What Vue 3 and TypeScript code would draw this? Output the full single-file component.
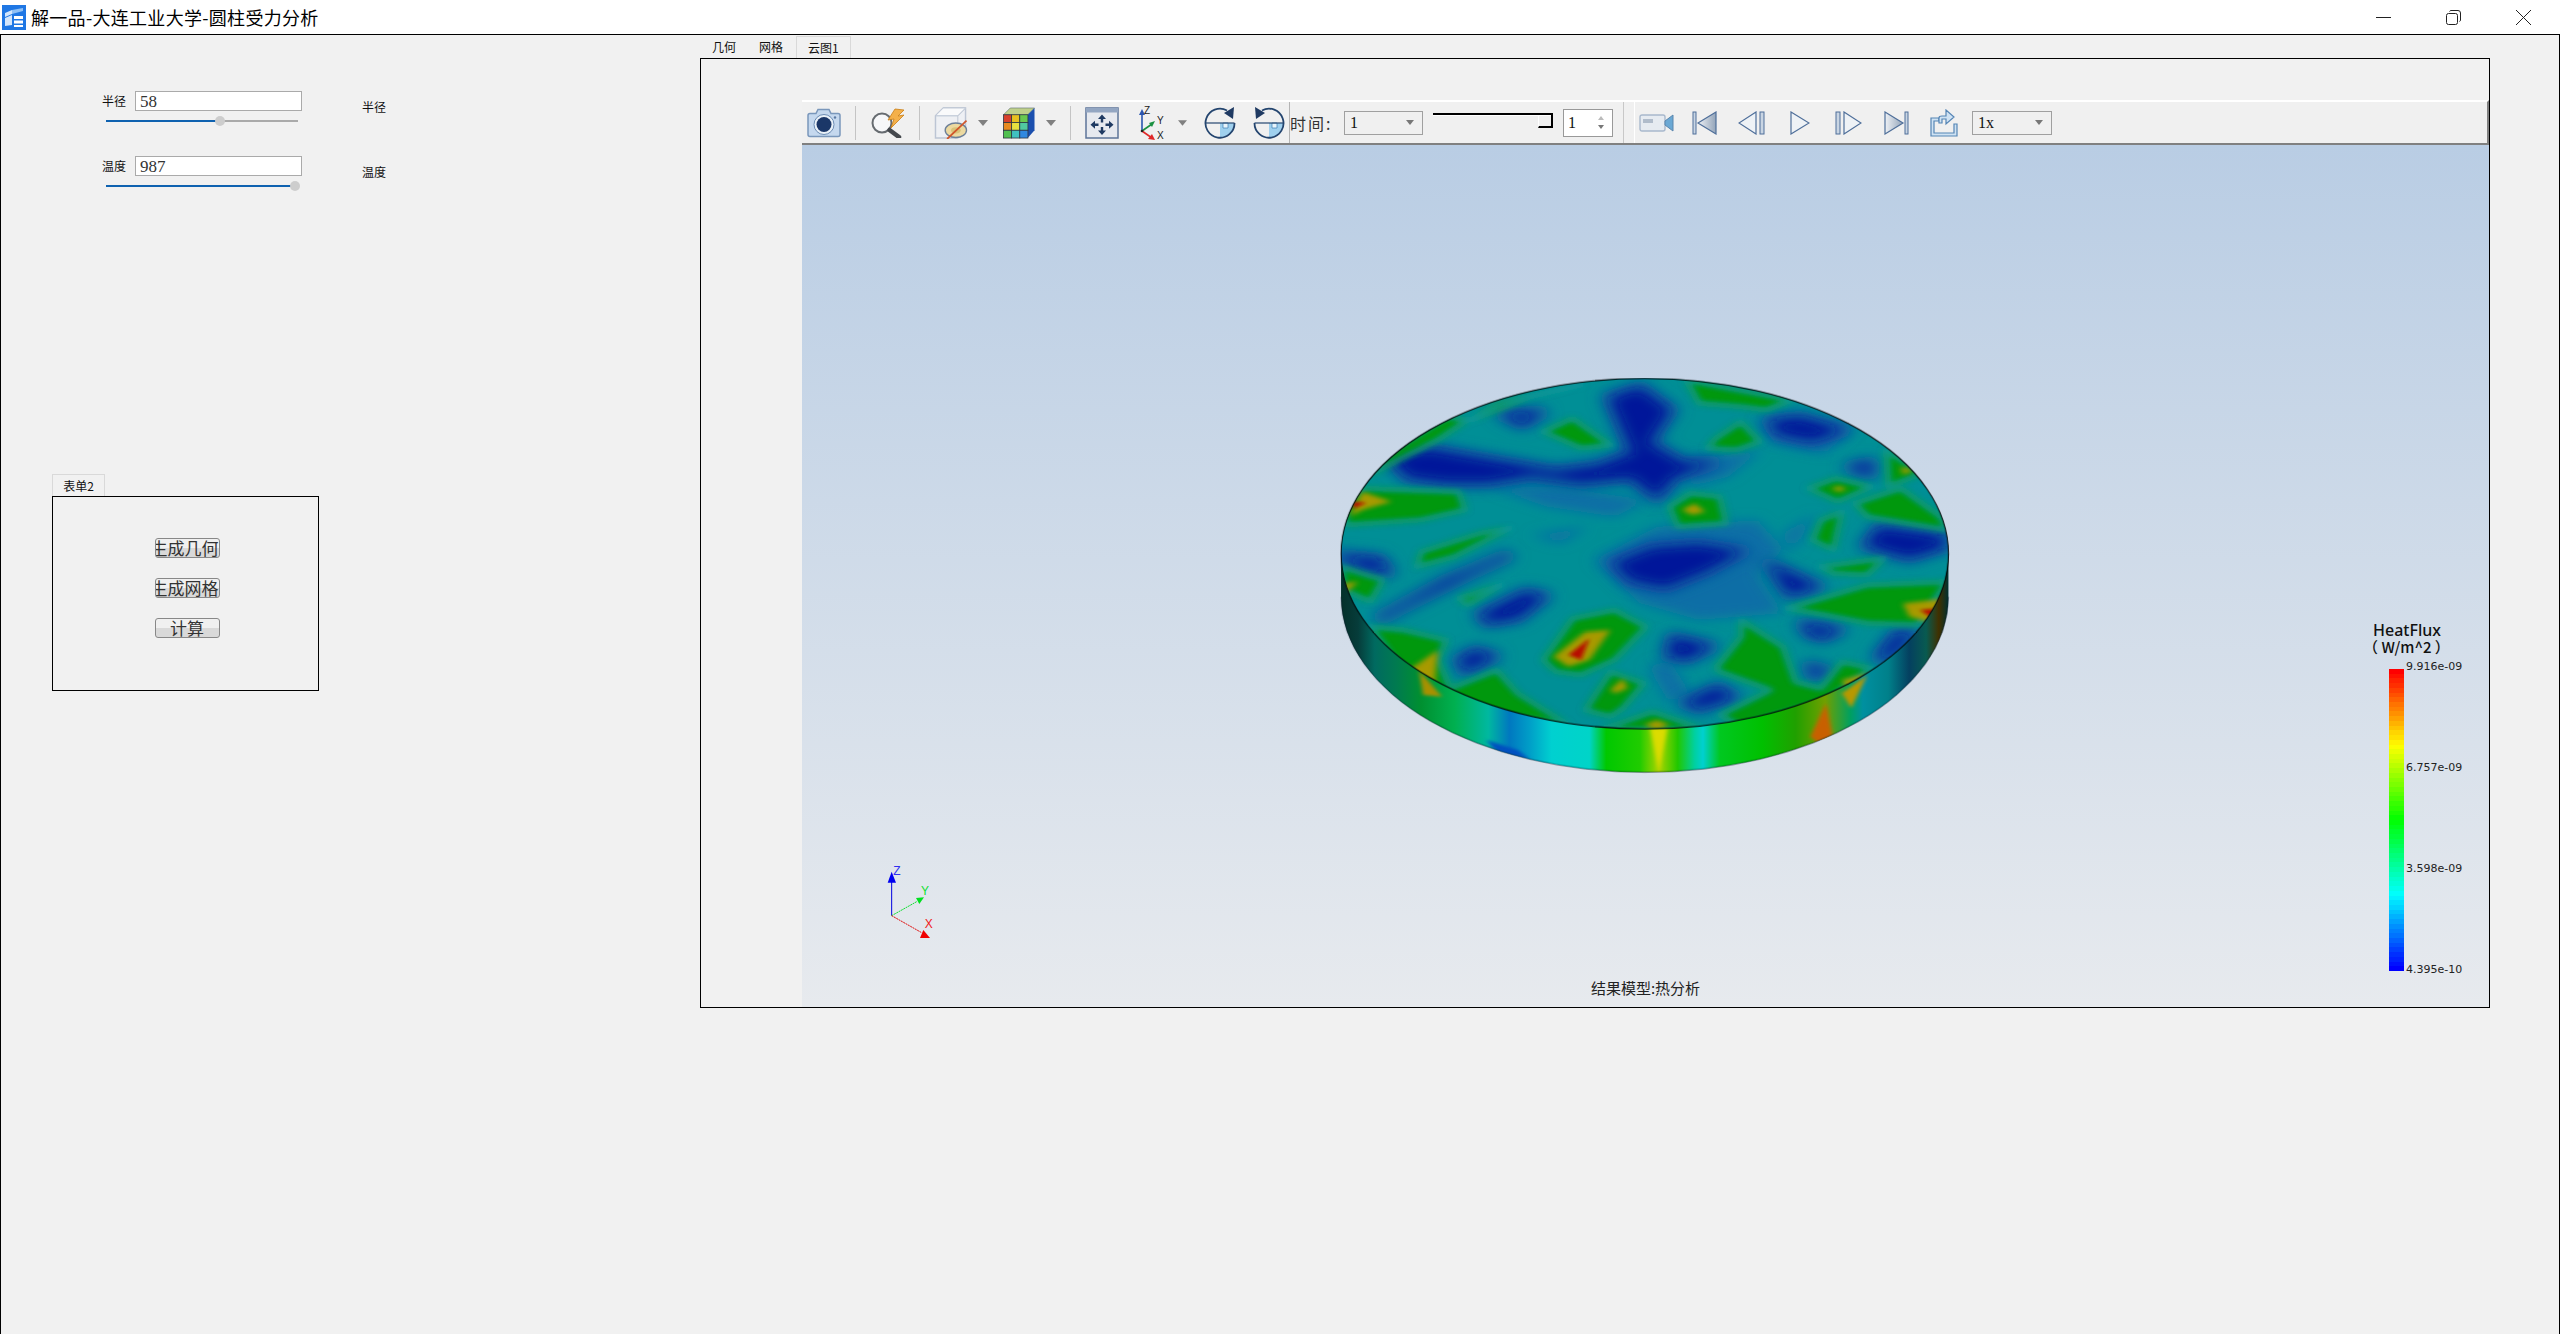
<script setup lang="ts">
interface Layer {
  color: string
  blur: string
  halo?: string
  shapes: string[]
}

// disk artwork is traced on a 1568x1290 grid, squeezed into 660x430 on screen
const blueShapes = [
  '165,290 260,270 420,305 560,335 660,320 745,280 690,115 760,85 830,150 780,250 860,310 930,310 840,350 800,410 740,350 620,365 500,345 400,365 300,365 210,350',
  '700,610 790,565 900,555 1000,575 920,630 820,680 740,660',
  '440,165 520,160 480,190',
  '1070,185 1140,175 1240,210 1170,240 1090,220',
  '1300,555 1330,505 1480,530 1480,560 1400,590',
  '1070,615 1180,680 1115,700',
  '1265,322 1305,312 1305,338',
  '50,590 140,600 160,635 100,620',
  '385,765 490,700 530,710 470,770 400,785',
  '150,770 300,665 440,590 370,630 210,730',
  '1150,795 1230,810 1195,830 1165,820',
  '840,835 925,860 870,895 830,885',
  '335,900 370,875 410,890 345,930',
  '870,1028 945,985 980,1010 900,1042',
  '1165,922 1195,932 1175,945',
  '1370,825 1405,820 1355,890 1330,890',
]
const midShapes = [
  '650,600 800,500 1040,480 1100,570 1040,640 1100,760 900,780 760,730',
  '780,920 830,900 880,1000 830,1030',
  '500,525 640,500 570,550',
  '880,300 1050,270 970,350 880,380',
  '1100,520 1180,460 1120,580',
  '400,380 560,380 780,420 700,470 540,440',
  '1040,180 1270,200 1200,280 1080,250',
]
const greenShapes = [
  '870,60 1120,120 1060,150 1000,140 900,130',
  '530,215 600,175 690,255 620,265',
  '940,235 1000,185 1045,245 990,270 920,265',
  '830,440 880,400 950,410 965,490 850,500',
  '1160,385 1225,355 1310,380 1230,425',
  '1345,270 1430,340 1350,380',
  '1270,430 1380,385 1475,470 1490,510 1300,470',
  '60,440 100,385 330,395 345,450 240,480 60,495',
  '240,575 380,520 450,505 320,590 230,620',
  '110,350 170,270 300,170 350,180 280,240',
  '120,800 200,810 300,840 280,900 310,985 420,930 470,1000 590,1095 400,1065 300,1000 180,910',
  '530,900 600,775 700,750 775,800 700,900 620,945 560,935',
  '630,1050 690,935 770,970 720,1045 690,1070',
  '700,1095 790,1055 860,1085 910,1110 660,1110',
  '940,925 1000,830 1000,780 1100,860 1130,965 1190,985 1240,905 1310,925 1200,1025 1000,1100 950,1065 1070,990 950,935',
  '1110,745 1300,675 1490,665 1420,795 1300,790 1200,765',
  '1190,620 1340,595 1300,645 1220,640',
  '1190,480 1240,455 1220,570 1170,540',
  '50,620 150,660 120,725 55,690',
  '330,715 430,675 350,735',
  '360,180 420,130 620,75 500,110',
]
const yellowShapes = [
  '70,470 100,395 170,425 100,450',
  '860,450 890,430 915,455 885,465',
  '555,890 630,815 690,810 640,900 590,920',
  '690,990 720,955 730,985 700,1000',
  '200,940 280,870 270,1000',
  '1385,730 1490,715 1460,790 1400,770',
  '1215,385 1235,378 1250,388 1232,395',
  '1380,320 1410,330 1385,345',
  '1240,960 1300,940 1260,1010',
  '55,670 90,665 60,700',
  '770,1095 800,1080 830,1095 800,1110',
]
const redShapes = [
  '76,425 110,428 80,445',
  '590,885 640,835 620,900',
  '1425,750 1475,745 1450,770',
]

const layers: Layer[] = [
  { color: '#0a6ea6', blur: 'url(#blur-wide)', shapes: midShapes },
  { color: '#00129a', blur: 'url(#blur-wide)', halo: '#0a5aa2', shapes: blueShapes },
  { color: '#009808', blur: 'url(#blur-mid)', shapes: greenShapes },
]

const sideColors: [number, string][] = [
  [50, '#04302a'], [90, '#063c3a'], [130, '#006a60'], [180, '#007a50'], [240, '#009030'],
  [320, '#00b050'], [400, '#00b8a0'], [450, '#0078c0'], [500, '#00a0c8'], [550, '#00d0d0'],
  [640, '#00d4c8'], [680, '#00c800'], [760, '#20cc00'], [805, '#a8d400'], [850, '#20c800'],
  [890, '#00d0a0'], [910, '#00d0d0'], [950, '#00c820'], [1050, '#00c000'], [1130, '#20a000'],
  [1200, '#70a000'], [1260, '#00a060'], [1290, '#0090a0'], [1350, '#00808a'], [1400, '#044060'],
  [1440, '#085a50'], [1470, '#403000'], [1493, '#003030'],
]
const sideStops = sideColors.map(([x, color]) => ({ offset: (x - 50) / 1443, color }))

const sideSpikes = [
  { color: '#dcdc00', points: '785,1105 825,1105 805,1235' },
  { color: '#c86000', points: '1165,1130 1202,1030 1218,1130 1205,1170' },
  { color: '#0050c0', points: '395,1140 470,1170 500,1200 420,1175' },
  { color: '#b89800', points: '1240,1000 1300,945 1262,1045' },
  { color: '#a89000', points: '235,930 290,1010 245,1005' },
]

const sidePath = 'M50,581 L50,711 A721.5,526 0 0 0 1493,711 L1493,581 Z'

// 64 steps from red down to blue, like the solver's color table
const legendBands = Array.from({ length: 64 }, (_, i) => `hsl(${Math.round((i / 63) * 240)}, 100%, 50%)`)
const legendLabels = ['9.916e-09', '6.757e-09', '3.598e-09', '4.395e-10']

const cubeCells = [
  '#d8402c', '#e8c020', '#68c850',
  '#e88a20', '#e8e040', '#50c8a0',
  '#50c050', '#40c0c0', '#3088e0',
]
</script>

<template>
  <div class="window">
    <header class="titlebar">
      <svg class="logo" viewBox="0 0 24 25">
        <rect width="24" height="25" fill="#1f77e4" />
        <path d="M3 8 L10 5 L10 9 L3 12 Z M3 13 L10 10 V20 L3 21 Z" fill="#d4e6fb" />
        <path d="M10 5 L21 3 V6 L10 9 Z" fill="#8fc0f5" />
        <path d="M12 11 H21 V14 H12 Z M12 15.500 H21 V18.500 H12 Z M12 20 H21 V22 H12 Z" fill="#fff" />
      </svg>
      <span class="app-title">解一品-大连工业大学-圆柱受力分析</span>
      <div class="win-buttons">
        <svg width="15" height="15" viewBox="0 0 15 15"><path d="M0 7.500H15" stroke="#222" fill="none" /></svg>
        <svg width="15" height="15" viewBox="0 0 15 15">
          <path d="M3.500 1.500 Q4 .5 5 .5 H12 Q14.500 .5 14.500 3 V10 Q14.500 11 13.500 11.500" stroke="#222" fill="none" />
          <rect x=".5" y="3.500" width="11" height="11" rx="2" stroke="#222" fill="none" />
        </svg>
        <svg width="15" height="15" viewBox="0 0 15 15"><path d="M0 0L15 15M15 0L0 15" stroke="#222" fill="none" /></svg>
      </div>
    </header>

    <main class="client">
      <section class="left">
        <div class="field">
          <div class="field-main">
            <div class="field-row">
              <label class="field-label">半径</label>
              <div class="text-input">58</div>
            </div>
            <div class="slider">
              <div class="slider-fill" style="width: 114px"></div>
              <div class="slider-thumb" style="left: 109px"></div>
            </div>
          </div>
          <span class="field-side">半径</span>
        </div>
        <div class="field">
          <div class="field-main">
            <div class="field-row">
              <label class="field-label">温度</label>
              <div class="text-input">987</div>
            </div>
            <div class="slider">
              <div class="slider-fill" style="width: 189px"></div>
              <div class="slider-thumb" style="left: 184px"></div>
            </div>
          </div>
          <span class="field-side">温度</span>
        </div>

        <div class="group">
          <div class="group-tab">表单2</div>
          <div class="group-box">
            <button class="push long">生成几何</button>
            <button class="push long">生成网格</button>
            <button class="push">计算</button>
          </div>
        </div>
      </section>

      <section class="right">
        <nav class="tabs">
          <span class="tab">几何</span>
          <span class="tab">网格</span>
          <span class="tab active">云图1</span>
        </nav>
        <div class="frame">
          <div class="viewer">
            <div class="toolbar">
              <div class="tb-view">
                <!-- camera -->
                <svg class="i34" viewBox="0 0 34 29">
                  <path d="M1 7 Q1 5 3 5 H9 L11 1 H22 L24 5 H31 Q33 5 33 7 V26 Q33 28 31 28 H3 Q1 28 1 26 Z" fill="#c5d8ee" stroke="#7a97bb" stroke-width="1.500" />
                  <circle cx="17" cy="16" r="10" fill="#eaf1f8" stroke="#6d8db4" />
                  <circle cx="17" cy="16" r="7.500" fill="#1b3768" />
                  <circle cx="28" cy="9" r="1.200" fill="#5b7aa3" />
                </svg>
                <span class="sep"></span>
                <!-- quick zoom -->
                <svg class="i35" viewBox="0 0 35 30">
                  <circle cx="12" cy="15" r="9.500" fill="#f6f7f9" stroke="#666b70" stroke-width="2" />
                  <path d="M19.500 22 L29 29" stroke="#44484d" stroke-width="4.500" stroke-linecap="round" />
                  <path d="M25 1 L18 12 L24 11 L21 20 L34 7 L28 8 L34 2 Z" fill="#f4b04a" stroke="#c97e14" stroke-width=".8" />
                </svg>
                <span class="sep"></span>
                <!-- hidden geometry -->
                <svg class="i34" viewBox="0 0 34 33">
                  <path d="M1 9 L9 1 H32 V23 L24 32 H1 Z" fill="#eef0f4" stroke="#bcc5d4" stroke-width="1.500" />
                  <path d="M1 9 H24 V32 M24 9 L32 1" fill="none" stroke="#c6ced9" stroke-width="1.200" />
                  <path d="M1 9 L9 1 H32 L24 9 Z" fill="#f9fafb" stroke="#bcc5d4" />
                  <ellipse cx="22" cy="24" rx="11" ry="7.500" fill="#ecd9a0" stroke="#6c7f98" stroke-width="1.400" />
                  <ellipse cx="22" cy="24" rx="5" ry="3.200" fill="#d9c378" />
                  <path d="M13 33 L33 14" stroke="#d0562a" stroke-width="1.800" />
                </svg>
                <svg class="drop" viewBox="0 0 10 6"><path d="M0 0H10L5 6Z" /></svg>
                <!-- result cube -->
                <svg class="i34 cube" viewBox="0 0 34 33">
                  <path d="M1 8 L8 1 H33 L26 8 Z" fill="#bfd08a" stroke="#5a6b70" stroke-width=".6" />
                  <path d="M26 8 L33 1 V24 L26 32 Z" fill="#1b4fae" />
                  <rect v-for="(c, i) in cubeCells" :key="i" :x="1 + (i % 3) * 8.400" :y="8 + Math.floor(i / 3) * 8" width="8.400" height="8" :fill="c" stroke="#2b3340" stroke-width=".8" />
                </svg>
                <svg class="drop" viewBox="0 0 10 6"><path d="M0 0H10L5 6Z" /></svg>
                <span class="sep"></span>
                <!-- fit all -->
                <svg class="i34" viewBox="0 0 34 32">
                  <rect x="1" y="1" width="32" height="30" fill="#e6e9ef" stroke="#5d7499" stroke-width="1.500" />
                  <rect x="1" y="1" width="32" height="4.500" fill="#93a6c2" />
                  <path d="M17 7.500 L21 12 H18.200 V15.500 H15.800 V12 H13 Z M17 28 L13 23.500 H15.800 V20 H18.200 V23.500 H21 Z M5.500 17.700 L10 13.700 V16.500 H13.500 V18.900 H10 V21.700 Z M28.500 17.700 L24 21.700 V18.900 H20.500 V16.500 H24 V13.700 Z" fill="#1f3a62" />
                </svg>
                <!-- axis -->
                <svg class="axis" viewBox="0 0 27 34">
                  <path d="M3 25 V7" stroke="#2a55b0" stroke-width="1.600" />
                  <path d="M3 3 L6 9 H0 Z" fill="#2a55b0" />
                  <path d="M3 25 L13 18" stroke="#1b9040" stroke-width="1.600" />
                  <path d="M16 15 L13 21 L10 17 Z" fill="#1b9040" />
                  <path d="M3 25 L13 32" stroke="#e02828" stroke-width="1.600" />
                  <path d="M16 34 L9 33 L13 28 Z" fill="#e02828" />
                  <circle cx="3" cy="25" r="1.300" fill="#222" />
                  <text class="axis-text" x="5" y="8">Z</text>
                  <text class="axis-text" x="18" y="18">Y</text>
                  <text class="axis-text" x="18" y="33">X</text>
                </svg>
                <svg class="drop small" viewBox="0 0 10 6"><path d="M0 0H10L5 6Z" /></svg>
                <!-- rotate cw -->
                <svg class="rot" viewBox="0 0 32 32">
                  <path d="M16 16 H30 A14.500 14.500 0 0 1 16 30.500 Z" fill="#9fd0ee" />
                  <path d="M19 16 V21 H24 V16 Z" fill="#e8f4fb" stroke="#3d7fb5" stroke-width=".7" />
                  <path d="M1.500 16 H30.500" stroke="#24456f" stroke-width="1.200" />
                  <path d="M23 3.500 A14.500 14.500 0 1 0 30.500 16" fill="none" stroke="#24456f" stroke-width="1.800" />
                  <path d="M30 0 L29 12 L20 6 Z" fill="#1f3a62" />
                </svg>
                <!-- rotate ccw -->
                <svg class="rot rot2" viewBox="0 0 32 32">
                  <path d="M16 16 H30 A14.500 14.500 0 0 1 16 30.500 Z" fill="#9fd0ee" />
                  <path d="M19 16 V21 H24 V16 Z" fill="#e8f4fb" stroke="#3d7fb5" stroke-width=".7" />
                  <path d="M1.500 16 H30.500" stroke="#24456f" stroke-width="1.200" />
                  <path d="M9 3.500 A14.500 14.500 0 1 1 1.500 16" fill="none" stroke="#24456f" stroke-width="1.800" />
                  <path d="M2 0 L3 12 L12 6 Z" fill="#1f3a62" />
                </svg>
              </div>

              <div class="tb-time">
                <span class="time-label">时间:</span>
                <div class="combo combo-time"><span>1</span><i class="combo-arrow"></i></div>
                <div class="time-slider"><div class="time-handle"></div></div>
                <div class="spin">
                  <span>1</span>
                  <div class="spin-arrows"><i class="up"></i><i class="down"></i></div>
                </div>
              </div>

              <div class="tb-play">
                <span class="play-btn">
                  <svg width="35" height="18" viewBox="0 0 35 18">
                    <defs>
                      <linearGradient id="media" x1="0" y1="0" x2="1" y2="0">
                        <stop offset="0" stop-color="#eef1f5" />
                        <stop offset="1" stop-color="#93a4b9" />
                      </linearGradient>
                    </defs>
                    <rect x="1" y="1" width="25" height="16" rx="2" fill="#e6ebf1" stroke="#a8b8cc" stroke-width="1.400" />
                    <rect x="4" y="5" width="10" height="4" fill="#b0bccb" />
                    <path d="M26 7 L34 1 V17 L26 11 Z" fill="#6aa8d4" stroke="#5a86ad" />
                  </svg>
                </span>
                <span class="play-btn">
                  <svg width="25" height="24" viewBox="0 0 25 24">
                    <rect x="1" y="1" width="3" height="22" fill="#c9d5e3" stroke="#4f6f9a" />
                    <path d="M24 1 V23 L6 12 Z" fill="url(#media)" stroke="#4f6f9a" stroke-width="1.200" />
                  </svg>
                </span>
                <span class="play-btn">
                  <svg width="28" height="24" viewBox="0 0 28 24">
                    <path d="M18 1 V23 L1 12 Z" fill="#eef2f6" stroke="#4f6f9a" stroke-width="1.200" />
                    <rect x="22" y="1" width="4" height="22" fill="#c9d5e3" stroke="#4f6f9a" />
                  </svg>
                </span>
                <span class="play-btn">
                  <svg width="20" height="24" viewBox="0 0 20 24">
                    <path d="M1 1 V23 L19 12 Z" fill="#eef2f6" stroke="#4f6f9a" stroke-width="1.200" />
                  </svg>
                </span>
                <span class="play-btn">
                  <svg width="28" height="24" viewBox="0 0 28 24">
                    <rect x="2" y="1" width="4" height="22" fill="#c9d5e3" stroke="#4f6f9a" />
                    <path d="M10 1 V23 L27 12 Z" fill="#eef2f6" stroke="#4f6f9a" stroke-width="1.200" />
                  </svg>
                </span>
                <span class="play-btn">
                  <svg width="25" height="24" viewBox="0 0 25 24">
                    <path d="M1 1 V23 L19 12 Z" fill="url(#media)" stroke="#4f6f9a" stroke-width="1.200" />
                    <rect x="21" y="1" width="3" height="22" fill="#c9d5e3" stroke="#4f6f9a" />
                  </svg>
                </span>
                <span class="play-btn">
                  <svg width="30" height="28" viewBox="0 0 30 28">
                    <path d="M2 9 H10 V12 H5 V24 H25 V15 H28 V27 H2 Z" fill="#cfe2f3" stroke="#5585b5" stroke-width="1.200" />
                    <path d="M10 14 V9 Q10 7 13 7 H17 V1 L25 8 L17 15 V10 H13 V14 Z" fill="#cfe2f3" stroke="#5585b5" stroke-width="1.200" />
                  </svg>
                </span>
                <div class="combo combo-speed"><span>1x</span><i class="combo-arrow"></i></div>
              </div>
            </div>

            <div class="view">
              <svg class="disk" viewBox="0 0 1568 1290" preserveAspectRatio="none">
                <defs>
                  <filter id="blur-wide" filterUnits="userSpaceOnUse" x="-100" y="-100" width="1800" height="1500"><feGaussianBlur stdDeviation="18" /></filter>
                  <filter id="blur-mid" filterUnits="userSpaceOnUse" x="-100" y="-100" width="1800" height="1500"><feGaussianBlur stdDeviation="11" /></filter>
                  <filter id="blur-small" filterUnits="userSpaceOnUse" x="-100" y="-100" width="1800" height="1500"><feGaussianBlur stdDeviation="7" /></filter>
                  <filter id="blur-tiny" filterUnits="userSpaceOnUse" x="-100" y="-100" width="1800" height="1500"><feGaussianBlur stdDeviation="5" /></filter>
                  <clipPath id="top-clip"><ellipse cx="771.5" cy="581" rx="721.5" ry="526" /></clipPath>
                  <clipPath id="side-clip"><path :d="sidePath" /></clipPath>
                  <linearGradient id="side-fill" gradientUnits="userSpaceOnUse" x1="50" y1="0" x2="1493" y2="0">
                    <stop v-for="s in sideStops" :key="s.offset" :offset="s.offset" :stop-color="s.color" />
                  </linearGradient>
                </defs>

                <path :d="sidePath" fill="url(#side-fill)" />
                <g clip-path="url(#side-clip)">
                  <g filter="url(#blur-tiny)">
                    <polygon v-for="s in sideSpikes" :key="s.points" :points="s.points" :fill="s.color" />
                  </g>
                </g>

                <ellipse cx="771.5" cy="581" rx="721.5" ry="526" fill="#008f96" />
                <g clip-path="url(#top-clip)">
                  <g v-for="layer in layers" :key="layer.color">
                    <g v-if="layer.halo" filter="url(#blur-wide)">
                      <polygon v-for="p in layer.shapes" :key="p" :points="p" :fill="layer.halo" :stroke="layer.halo" stroke-width="46" stroke-linejoin="round" />
                    </g>
                    <g :filter="layer.blur">
                      <polygon v-for="p in layer.shapes" :key="p" :points="p" :fill="layer.color" />
                    </g>
                  </g>
                  <g filter="url(#blur-small)">
                    <polygon v-for="p in greenShapes" :key="p" :points="p" fill="none" stroke="#1a9ca4" stroke-width="14" stroke-linejoin="round" opacity=".55" />
                  </g>
                  <g filter="url(#blur-small)">
                    <polygon v-for="p in yellowShapes" :key="p" :points="p" fill="#a89a00" />
                  </g>
                  <g filter="url(#blur-tiny)">
                    <polygon v-for="p in redShapes" :key="p" :points="p" fill="#b81000" />
                  </g>
                </g>
                <ellipse cx="771.5" cy="581" rx="721.5" ry="526" fill="none" stroke="#000" stroke-width="1" vector-effect="non-scaling-stroke" />
                <path d="M50,711 A721.5,526 0 0 0 1493,711" fill="none" stroke="#123" stroke-width=".6" vector-effect="non-scaling-stroke" />
              </svg>

              <svg class="triad" viewBox="0 0 360 300">
                <path d="M95 197 V90" stroke="#0000e0" stroke-width="3" />
                <path d="M95 65 L108 98 H83 Z" fill="#0000f0" />
                <text class="triad-text" x="100" y="75" fill="#3030f0">Z</text>
                <path d="M95 197 L170 155" stroke="#10e030" stroke-width="3" stroke-dasharray="6 2" />
                <path d="M168 144 L192 142 L178 162 Z" fill="#00e020" />
                <text class="triad-text" x="183" y="135" fill="#10e030">Y</text>
                <path d="M95 197 L185 248" stroke="#e01010" stroke-width="3" stroke-dasharray="6 2" />
                <path d="M190 240 L210 264 H180 Z" fill="#f00000" />
                <text class="triad-text" x="194" y="234" fill="#f02020">X</text>
              </svg>

              <div class="legend">
                <div class="legend-title">HeatFlux</div>
                <div class="legend-unit">（ W/m^2 ）</div>
                <div class="legend-body">
                  <div class="legend-bar">
                    <div v-for="(c, i) in legendBands" :key="i" class="legend-band" :style="{ background: c }"></div>
                  </div>
                  <div class="legend-labels">
                    <span v-for="l in legendLabels" :key="l">{{ l }}</span>
                  </div>
                </div>
              </div>

              <div class="caption">结果模型:热分析</div>
            </div>
          </div>
        </div>
      </section>
    </main>
  </div>
</template>

<style>
html,
body {
  margin: 0;
  background: #f1f1f1;
}
</style>

<style scoped>
.window {
  width: 2560px;
  height: 1334px;
  display: flex;
  flex-direction: column;
  overflow: hidden;
  color: #111;
  font-family: "Noto Sans CJK SC", "Liberation Sans", sans-serif;
}

.titlebar {
  height: 34px;
  flex: none;
  background: #fff;
  display: flex;
  align-items: center;
  padding-left: 2px;
}

.logo {
  width: 24px;
  height: 25px;
}

.app-title {
  margin-left: 5px;
  font-size: 18px;
  letter-spacing: 0.3px;
  color: #000;
}

.win-buttons {
  margin-left: auto;
  margin-right: 29px;
  display: flex;
  gap: 55px;
}

.client {
  flex: 1;
  display: flex;
  background: #f1f1f1;
  border-top: 1px solid #000;
  border-left: 1px solid #000;
  border-right: 1px solid #000;
  min-height: 0;
}

.left {
  width: 699px;
  flex: none;
  padding: 56px 0 0 51px;
  box-sizing: border-box;
}

.field {
  display: flex;
  margin-left: 50px;
  margin-bottom: 34px;
}

.field-main {
  width: 200px;
}

.field-row {
  display: flex;
  align-items: center;
}

.field-label {
  width: 33px;
  font-size: 12px;
  line-height: 20px;
}

.text-input {
  width: 167px;
  height: 20px;
  box-sizing: border-box;
  background: #fff;
  border: 1px solid #aaa;
  padding-left: 4px;
  font: 17px/19px "Liberation Serif", serif;
  color: #333;
}

.slider {
  position: relative;
  margin: 9px 0 0 4px;
  width: 192px;
  height: 2px;
  background: #aaa;
}

.slider-fill {
  height: 2px;
  background: #0f62b0;
}

.slider-thumb {
  position: absolute;
  top: -4px;
  width: 10px;
  height: 10px;
  border-radius: 50%;
  background: #cdcdcd;
}

.field-side {
  margin: 7px 0 0 60px;
  font-size: 12px;
  line-height: 18px;
}

.group {
  margin-top: 287px;
  width: 267px;
}

.group-tab {
  width: 53px;
  height: 22px;
  box-sizing: border-box;
  border: 1px solid #d9d9d9;
  border-bottom: 0;
  text-align: center;
  font-size: 12px;
  line-height: 22px;
}

.group-box {
  height: 195px;
  box-sizing: border-box;
  border: 1px solid #000;
  display: flex;
  flex-direction: column;
  align-items: center;
  gap: 20px;
  padding: 41px 0 0 3px;
}

.push {
  width: 65px;
  height: 20px;
  padding: 0;
  display: flex;
  align-items: center;
  justify-content: center;
  overflow: hidden;
  white-space: nowrap;
  border: 1px solid #888;
  border-radius: 3px;
  background: linear-gradient(#f0f0f0 50%, #d9d9d9 50%);
  font-family: inherit;
  font-size: 17px;
  line-height: 18px;
  color: #333;
}

.push.long {
  justify-content: flex-end;
}

.right {
  flex: 1;
  display: flex;
  flex-direction: column;
  padding-top: 1px;
  min-width: 0;
}

.tabs {
  display: flex;
  height: 22px;
  flex: none;
}

.tab {
  padding: 0 12px;
  margin-right: -1px;
  font-size: 12px;
  line-height: 22px;
}

.tab.active {
  margin-left: 2px;
  box-sizing: border-box;
  border: 1px solid #d9d9d9;
  border-bottom: 0;
  padding: 0 11px;
}

.frame {
  width: 1790px;
  height: 950px;
  box-sizing: border-box;
  border: 1px solid #000;
  padding: 41px 0 0 101px;
}

.viewer {
  height: 100%;
  display: flex;
  flex-direction: column;
}

.toolbar {
  height: 45px;
  flex: none;
  box-sizing: border-box;
  display: flex;
  border-top: 2px solid #fff;
  border-bottom: 2px solid #808080;
  border-right: 2px solid #808080;
  background: #f0f0f0;
}

.tb-view {
  width: 488px;
  flex: none;
  display: flex;
  align-items: center;
  gap: 14px;
  padding-left: 5px;
  box-sizing: border-box;
  border-right: 1px solid #b4b4b4;
}

.sep {
  width: 1px;
  height: 34px;
  background: #c4c4c4;
}

.i34 {
  width: 34px;
  height: 32px;
  flex: none;
}

.i35 {
  width: 35px;
  height: 30px;
  flex: none;
}

.drop {
  width: 10px;
  height: 6px;
  margin-left: -4px;
  fill: #808080;
  flex: none;
}

.drop.small {
  width: 9px;
  margin-left: -2px;
}

.axis {
  width: 27px;
  height: 34px;
  margin-left: 6px;
  flex: none;
}

.axis-text {
  font: 10px "Liberation Sans", sans-serif;
  fill: #222;
}

.rot {
  width: 32px;
  height: 32px;
  margin-left: 3px;
  flex: none;
}

.tb-time {
  width: 334px;
  flex: none;
  display: flex;
  align-items: center;
  gap: 10px;
  box-sizing: border-box;
  border-right: 1px solid #c8c8c8;
}

.time-label {
  width: 44px;
  flex: none;
  font-size: 16px;
  letter-spacing: 2px;
  color: #333;
  white-space: nowrap;
}

.combo {
  position: relative;
  height: 24px;
  flex: none;
  box-sizing: border-box;
  border: 1px solid #a0a0a0;
  padding-left: 5px;
  font: 16px/22px "Liberation Serif", serif;
}

.combo-time {
  width: 79px;
}

.combo-speed {
  width: 80px;
  margin-left: 4px;
}

.combo-arrow {
  position: absolute;
  right: 8px;
  top: 8px;
  border-left: 4px solid transparent;
  border-right: 4px solid transparent;
  border-top: 5px solid #777;
}

.time-slider {
  position: relative;
  width: 120px;
  height: 15px;
  flex: none;
  margin-bottom: 5px;
  border-top: 2px solid #000;
  box-sizing: border-box;
  box-shadow: inset 0 1px 0 #fff;
}

.time-handle {
  position: absolute;
  right: 0;
  top: 0;
  width: 15px;
  height: 13px;
  box-sizing: border-box;
  border-right: 2px solid #000;
  border-bottom: 2px solid #000;
  border-left: 1px solid #fff;
}

.spin {
  width: 50px;
  height: 28px;
  flex: none;
  box-sizing: border-box;
  background: #fff;
  border: 1px solid #999;
  padding-left: 4px;
  display: flex;
  align-items: center;
  justify-content: space-between;
  font: 16px "Liberation Serif", serif;
}

.spin-arrows {
  display: flex;
  flex-direction: column;
  gap: 5px;
  margin-right: 8px;
}

.spin-arrows i {
  border-left: 3px solid transparent;
  border-right: 3px solid transparent;
}

.spin-arrows .up {
  border-bottom: 4px solid #bbb;
}

.spin-arrows .down {
  border-top: 4px solid #777;
}

.tb-play {
  flex: 1;
  display: flex;
  align-items: center;
  margin-left: 10px;
  border-left: 1px solid #fff;
}

.play-btn {
  width: 48px;
  flex: none;
  display: flex;
  justify-content: center;
}

.play-btn:first-child {
  margin-left: -3px;
}

.view {
  position: relative;
  flex: 1;
  background: linear-gradient(#b9cde4, #e7eaee);
}

.disk {
  position: absolute;
  left: 518px;
  top: 215px;
  width: 660px;
  height: 430px;
}

.triad {
  position: absolute;
  left: 58px;
  top: 705px;
  width: 120px;
  height: 100px;
}

.triad-text {
  font: 36px "Liberation Sans", sans-serif;
}

.legend {
  position: absolute;
  left: 1569px;
  top: 477px;
}

.legend-title {
  margin-left: 2px;
  font: 500 16px/17px "Noto Sans", sans-serif;
  color: #111;
}

.legend-unit {
  font: 500 15px/16px "Noto Sans CJK SC", sans-serif;
  margin-left: -8px;
  color: #111;
  white-space: nowrap;
}

.legend-body {
  display: flex;
  margin: 14px 0 0 18px;
}

.legend-bar {
  width: 15px;
  height: 302px;
  display: flex;
  flex-direction: column;
}

.legend-band {
  flex: 1;
}

.legend-labels {
  height: 317px;
  margin: -9px 0 0 2px;
  display: flex;
  flex-direction: column;
  justify-content: space-between;
  font: 11px/14px "DejaVu Sans", sans-serif;
  color: #222;
}

.caption {
  position: absolute;
  left: 0;
  right: 0;
  bottom: 10px;
  text-align: center;
  font-size: 15px;
  line-height: 18px;
  color: #222;
}
</style>
